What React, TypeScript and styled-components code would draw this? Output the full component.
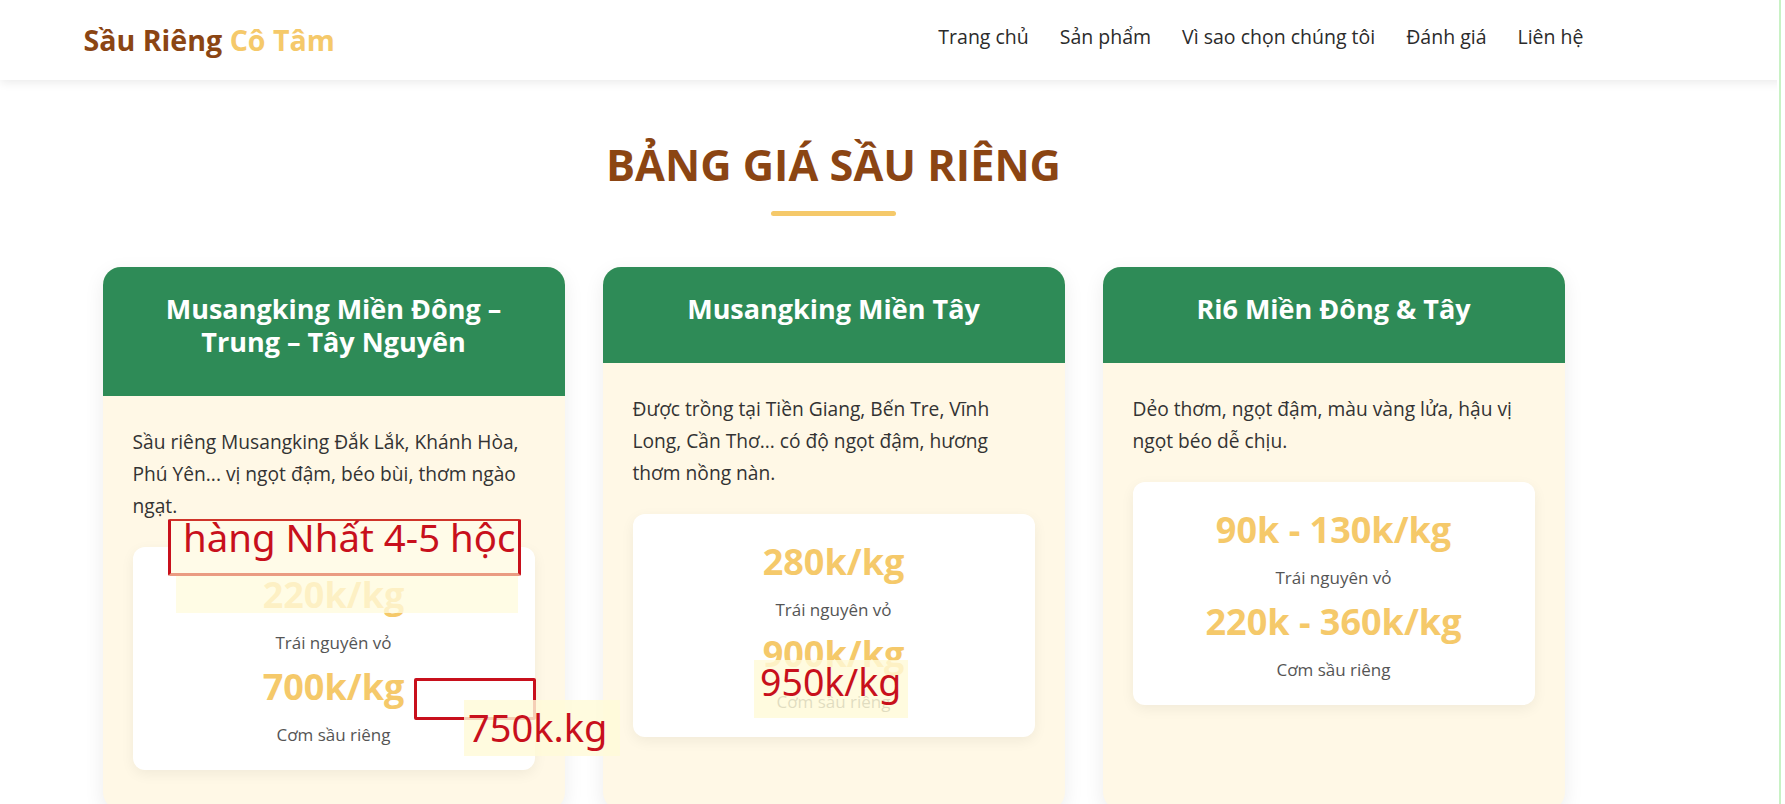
import React from "react";
import styled, { createGlobalStyle } from "styled-components";

const BROWN = "#8B4513";
const YELLOW = "#f5c96a";
const GREEN = "#2E8B57";
const CREAM = "#FFF8E6";
const RED = "#c8101c";

const Global = createGlobalStyle`
  html, body {
    margin: 0;
    padding: 0;
    overflow: hidden;
    background: #ffffff;
  }
  body {
    font-family: "Open Sans", "Noto Sans", sans-serif;
    color: #333;
  }
  * { box-sizing: border-box; }
`;

const Page = styled.div`
  position: relative;
  min-height: 804px;
`;

const Header = styled.header`
  position: relative;
  z-index: 2;
  background: #ffffff;
  box-shadow: 0 2px 10px rgba(0, 0, 0, 0.09);
`;

const Frame = styled.div`
  width: 1667px;
`;

const HeaderInner = styled.div`
  max-width: 1500px;
  height: 80px;
  margin: 0 auto;
  display: flex;
  align-items: center;
  justify-content: space-between;
`;

const Logo = styled.div`
  font-size: 28.6px;
  font-weight: 700;
  line-height: 40px;
  color: ${BROWN};
  white-space: nowrap;
`;

const LogoAccent = styled.span`
  color: ${YELLOW};
`;

const Nav = styled.nav`
  display: flex;
  gap: 31px;
  margin-top: -6px;
`;

const NavLink = styled.a`
  font-size: 19.5px;
  font-weight: 500;
  line-height: 28px;
  color: #2b2b2b;
  text-decoration: none;
  white-space: nowrap;
`;

const Section = styled.section`
  padding-top: 59px;
`;

const Title = styled.h2`
  margin: 0;
  text-align: center;
  font-size: 43.3px;
  line-height: 52px;
  font-weight: 700;
  color: ${BROWN};
`;

const Bar = styled.div`
  width: 125px;
  height: 5px;
  margin: 20px auto 0;
  border-radius: 3px;
  background: ${YELLOW};
`;

const Grid = styled.div`
  max-width: 1462px;
  margin: 51px auto 0;
  display: grid;
  grid-template-columns: repeat(3, 1fr);
  gap: 38px;
  align-items: stretch;
`;

const Card = styled.article`
  display: flex;
  flex-direction: column;
  border-radius: 18px;
  overflow: hidden;
  background: ${CREAM};
  box-shadow: 0 6px 20px rgba(0, 0, 0, 0.08);
`;

const CardHeader = styled.div`
  background: ${GREEN};
  padding: 25px 25px 38px;
  text-align: center;
`;

const CardTitle = styled.h3`
  margin: 0;
  color: #ffffff;
  font-size: 27px;
  line-height: 33px;
  font-weight: 700;
`;

const CardBody = styled.div`
  flex: 1;
  padding: 30px 30px 40px;
`;

const Desc = styled.p`
  margin: 0 0 25px;
  padding-right: 8px;
  font-size: 19.2px;
  line-height: 32px;
  color: #333;
`;

const PriceBox = styled.div`
  background: #ffffff;
  border-radius: 12px;
  padding: 24px 20px 22px;
  text-align: center;
  box-shadow: 0 4px 14px rgba(0, 0, 0, 0.06);
`;

const Price = styled.div`
  margin: 0 0 11px;
  font-size: 36px;
  line-height: 48px;
  font-weight: 700;
  color: ${YELLOW};
`;

const PriceLabel = styled.div`
  margin: 0 0 7px;
  font-size: 17px;
  line-height: 26px;
  color: #555;
  &:last-child {
    margin-bottom: 0;
  }
`;

/* ---------- annotation overlay (drawn over the screenshot) ---------- */

const Overlay = styled.div`
  position: absolute;
  inset: 0;
  z-index: 3;
  pointer-events: none;
  font-family: "Noto Sans", "Open Sans", sans-serif;
`;

const Haze = styled.div<{ $l: number; $t: number; $w: number; $h: number }>`
  position: absolute;
  left: ${(p) => p.$l}px;
  top: ${(p) => p.$t}px;
  width: ${(p) => p.$w}px;
  height: ${(p) => p.$h}px;
  background: rgba(255, 251, 222, 0.78);
`;

const MarkBox = styled.div`
  position: absolute;
  left: 168px;
  top: 519px;
  width: 353px;
  height: 57px;
  border-left: 3px solid ${RED};
  border-right: 3px solid ${RED};
  border-top: 2px solid #d0342a;
  border-bottom: 3px solid #ea9b82;
  border-radius: 2px;
  background: #fffbe8;
  padding-left: 12px;
  font-size: 38.4px;
  line-height: 33px;
  color: ${RED};
  white-space: nowrap;
`;

const OpenRect = styled.div`
  position: absolute;
  left: 414px;
  top: 678px;
  width: 122px;
  height: 42px;
  border: 3px solid ${RED};
  border-radius: 2px;
`;

const Note = styled.div<{ $l: number; $t: number; $w: number; $h: number; $size: number; $lh: number; $pt: number; $pl: number }>`
  position: absolute;
  left: ${(p) => p.$l}px;
  top: ${(p) => p.$t}px;
  width: ${(p) => p.$w}px;
  height: ${(p) => p.$h}px;
  padding: ${(p) => p.$pt}px 0 0 ${(p) => p.$pl}px;
  background: rgba(255, 250, 216, 0.82);
  font-size: ${(p) => p.$size}px;
  line-height: ${(p) => p.$lh}px;
  color: ${RED};
  white-space: nowrap;
`;

const EdgeStrip = styled.div`
  position: fixed;
  top: 0;
  right: 0;
  width: 8px;
  height: 100vh;
  z-index: 5;
  background: linear-gradient(
    to right,
    #ffffff 0 2px,
    #c8f2c4 2px 4px,
    #ffffff 4px 8px
  );
`;

type PriceRow = { price: string; label: string };
type CardData = { title: string; desc: string; prices: PriceRow[] };

const cards: CardData[] = [
  {
    title: "Musangking Miền Đông – Trung – Tây Nguyên",
    desc: "Sầu riêng Musangking Đắk Lắk, Khánh Hòa, Phú Yên... vị ngọt đậm, béo bùi, thơm ngào ngạt.",
    prices: [
      { price: "220k/kg", label: "Trái nguyên vỏ" },
      { price: "700k/kg", label: "Cơm sầu riêng" },
    ],
  },
  {
    title: "Musangking Miền Tây",
    desc: "Được trồng tại Tiền Giang, Bến Tre, Vĩnh Long, Cần Thơ... có độ ngọt đậm, hương thơm nồng nàn.",
    prices: [
      { price: "280k/kg", label: "Trái nguyên vỏ" },
      { price: "900k/kg", label: "Cơm sầu riêng" },
    ],
  },
  {
    title: "Ri6 Miền Đông & Tây",
    desc: "Dẻo thơm, ngọt đậm, màu vàng lửa, hậu vị ngọt béo dễ chịu.",
    prices: [
      { price: "90k - 130k/kg", label: "Trái nguyên vỏ" },
      { price: "220k - 360k/kg", label: "Cơm sầu riêng" },
    ],
  },
];

const links = ["Trang chủ", "Sản phẩm", "Vì sao chọn chúng tôi", "Đánh giá", "Liên hệ"];

export default function App() {
  return (
    <Page>
      <Global />
      <Header>
        <Frame>
          <HeaderInner>
            <Logo>
              Sầu Riêng <LogoAccent>Cô Tâm</LogoAccent>
            </Logo>
            <Nav>
              {links.map((l) => (
                <NavLink key={l} href="#">
                  {l}
                </NavLink>
              ))}
            </Nav>
          </HeaderInner>
        </Frame>
      </Header>

      <main>
        <Frame>
          <Section>
            <Title>BẢNG GIÁ SẦU RIÊNG</Title>
            <Bar />
            <Grid>
              {cards.map((c) => (
                <Card key={c.title}>
                  <CardHeader>
                    <CardTitle>{c.title}</CardTitle>
                  </CardHeader>
                  <CardBody>
                    <Desc>{c.desc}</Desc>
                    <PriceBox>
                      {c.prices.map((p) => (
                        <React.Fragment key={p.price}>
                          <Price>{p.price}</Price>
                          <PriceLabel>{p.label}</PriceLabel>
                        </React.Fragment>
                      ))}
                    </PriceBox>
                  </CardBody>
                </Card>
              ))}
            </Grid>
          </Section>
        </Frame>
      </main>

      <Overlay>
        <Haze $l={176} $t={576} $w={342} $h={37} />
        <MarkBox>hàng Nhất 4-5 hộc</MarkBox>
        <OpenRect />
        <Note $l={464} $t={700} $w={156} $h={56} $size={38} $lh={54} $pt={0} $pl={4}>
          750k.kg
        </Note>
        <Note $l={754} $t={660} $w={154} $h={58} $size={37.5} $lh={38} $pt={3} $pl={6}>
          950k/kg
        </Note>
      </Overlay>
      <EdgeStrip />
    </Page>
  );
}
